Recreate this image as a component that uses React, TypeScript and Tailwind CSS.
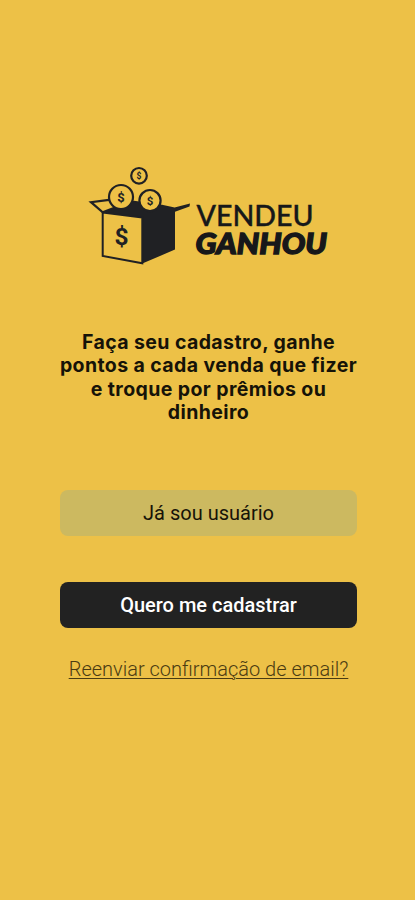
interface CoinProps {
  cx: number;
  cy: number;
  r: number;
  size: number;
}

const Coin = ({ cx, cy, r, size }: CoinProps) => (
  <g>
    <circle cx={cx} cy={cy} r={r} fill="#EDC147" stroke="#202124" strokeWidth="2.2" />
    <text
      x={cx}
      y={cy + size * 0.36}
      textAnchor="middle"
      fontSize={size}
      className="font-['Roboto',sans-serif] font-bold"
      fill="#202124"
    >
      $
    </text>
  </g>
);

const Logo = () => (
  <svg width="244" height="104" viewBox="0 0 244 104" role="img" aria-label="Vendeu Ganhou">
    {/* box */}
    <path
      d="M15.7 47.3 28 41.5 47 35.7 75 39.8 87.6 42.6 103 38.4 102.5 41.4 88 46.8 88 84.6 55.3 98.5 55.3 52.6Z"
      fill="#202124"
    />
    <path
      d="M15.7 47.5 55.3 52.6 55.3 98.3 15.7 91Z"
      fill="#EDC147"
      stroke="#202124"
      strokeWidth="2"
    />
    <path
      d="M22 34.8 4 37.2 15.7 47.3 30 41.8"
      fill="#EDC147"
      stroke="#202124"
      strokeWidth="2.2"
    />
    <text
      x="34.5"
      y="80.2"
      textAnchor="middle"
      fontSize="24.5"
      className="font-['Roboto',sans-serif] font-bold"
      fill="#202124"
    >
      $
    </text>

    <Coin cx={52} cy={10.8} r={7.8} size={8.5} />
    <Coin cx={34} cy={32} r={12} size={13} />
    <Coin cx={63} cy={35.6} r={10.6} size={11.5} />

    {/* wordmark */}
    <text
      x="109.5"
      y="60.9"
      fontSize="29"
      textLength="117"
      lengthAdjust="spacingAndGlyphs"
      className="font-['Lato',sans-serif] font-medium"
      fill="#17181a"
      stroke="#17181a"
      strokeWidth="0.4"
    >
      VENDEU
    </text>
    <text
      x="108.5"
      y="89.1"
      fontSize="27.5"
      textLength="131.5"
      lengthAdjust="spacingAndGlyphs"
      className="font-['Lato',sans-serif] font-black italic"
      fill="#17181a"
      stroke="#17181a"
      strokeWidth="1.3"
    >
      GANHOU
    </text>
  </svg>
);

export default function App() {
  return (
    <main className="flex min-h-screen flex-col items-center bg-[#EDC147] pt-[165px] pl-0.5 font-['Roboto',sans-serif] text-black">
      <Logo />

      <p className="mt-[62px] w-[320px] text-center font-['Inter',sans-serif] text-[19.5px] leading-[23.4px] font-bold tracking-[0.4px] text-[#161308]">
        Faça seu cadastro, ganhe
        <br />
        pontos a cada venda que fizer
        <br />
        e troque por prêmios ou
        <br />
        dinheiro
      </p>

      <div className="mt-[65.4px] flex w-[297px] flex-col">
        <button className="h-[46px] rounded-lg bg-[#CCB960] text-[20px] text-[#161308]">
          Já sou usuário
        </button>
        <button className="mt-[46px] h-[46px] rounded-lg bg-[#222222] text-[20px] font-medium text-white">
          Quero me cadastrar
        </button>
      </div>

      <a
        href="#"
        className="mt-[28px] text-[20px] leading-[26px] font-light whitespace-nowrap text-[#4a3b12] underline decoration-1 underline-offset-2"
      >
        Reenviar confirmação de email?
      </a>
    </main>
  );
}
